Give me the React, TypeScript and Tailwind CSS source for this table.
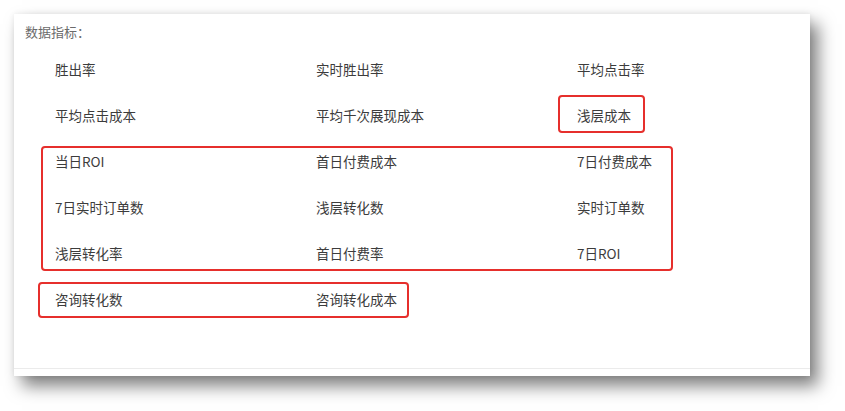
import React from 'react';

const rows: string[][] = [
  ['胜出率', '实时胜出率', '平均点击率'],
  ['平均点击成本', '平均千次展现成本', '浅层成本'],
  ['当日ROI', '首日付费成本', '7日付费成本'],
  ['7日实时订单数', '浅层转化数', '实时订单数'],
  ['浅层转化率', '首日付费率', '7日ROI'],
  ['咨询转化数', '咨询转化成本'],
];

// red annotation frames, relative to the card
const marks = [
  'left-[544px] top-[81px] w-[87px] h-[38px]',
  'left-[27px] top-[132px] w-[632px] h-[125px]',
  'left-[24px] top-[268px] w-[371px] h-[36px]',
];

export default function App() {
  return (
    <div
      className="w-[845px] h-[411px] bg-white pt-[14px] pl-[14px]"
      style={{ fontFamily: '"Microsoft YaHei", "Noto Sans CJK SC", "Noto Sans", sans-serif' }}
    >
      <div className="relative w-[796px] h-[362px] bg-white shadow-[8px_10px_16px_rgba(0,0,0,0.5),0_0_6px_rgba(0,0,0,0.08)]">
        <div className="h-[355px] border-b border-[#ebebeb] pl-[11px] pt-[8px]">
          <div className="text-[13px] leading-[20px] text-[#6b6b6b]">数据指标：</div>
          <div className="mt-[4px] pl-[30px]">
            {rows.map((r, i) => (
              <div key={i} className="grid grid-cols-[261px_261px_261px] h-[46px] items-center">
                {r.map((t) => (
                  <span key={t} className="text-[13.5px] text-[#3c3c3c]">{t}</span>
                ))}
              </div>
            ))}
          </div>
        </div>
        {marks.map((m) => (
          <div key={m} className={`absolute border-2 border-[#e62f2c] rounded-[4px] ${m}`} />
        ))}
      </div>
    </div>
  );
}
